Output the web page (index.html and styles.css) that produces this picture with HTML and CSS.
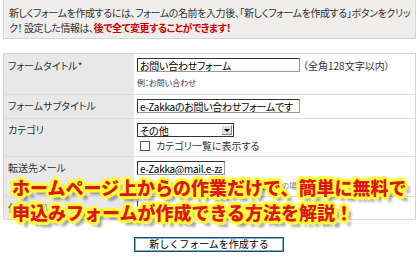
FILE: index.html
```html
<!DOCTYPE html>
<html lang="ja">
<head>
    <meta charset="UTF-8">
    <title>フォーム作成</title>
    <link rel="stylesheet" href="styles.css">
</head>
<body>

    <div class="page">
        <div class="intro">
            新しくフォームを作成するには、フォームの名前を入力後、「新しくフォームを作成する」ボタンをクリッ<br>
            ク！ 設定した情報は、<strong>後で全て変更することができます！</strong>
        </div>

        <table class="form-table">
            <tr class="row-title">
                <th>フォームタイトル*</th>
                <td>
                    <input type="text" class="field wide" value="お問い合わせフォーム"><span class="note">（全角128文字以内）</span>
                    <div class="sample">例：お問い合わせ</div>
                </td>
            </tr>
            <tr class="row-sub">
                <th>フォームサブタイトル</th>
                <td><input type="text" class="field wide" value="e-Zakkaのお問い合わせフォームです"></td>
            </tr>
            <tr class="row-cat">
                <th>カテゴリ</th>
                <td>
                    <div class="select"><span>その他</span><i class="arrow"></i></div>
                    <label class="check"><span class="box"></span>カテゴリ一覧に表示する</label>
                </td>
            </tr>
            <tr class="row-mail">
                <th>転送先メール</th>
                <td>
                    <input type="text" class="field short" value="e-Zakka@mail.e-zakka.jp">
                    <div class="sample">※複数指定する場合は改行して入力。空欄の場合は登録アドレス</div>
                </td>
            </tr>
            <tr class="row-opt">
                <th>任意項目</th>
                <td><div class="area"></div></td>
            </tr>
        </table>

        <div class="actions">
            <button type="button" class="submit">新しくフォームを作成する</button>
        </div>

        <!-- 画像の上に載せたキャッチコピー -->
        <div class="catch">
            ホームページ上からの作業だけで、簡単に無料で<br>
            申込みフォームが作成できる方法を解説！
        </div>
    </div>

</body>
</html>
```

FILE: styles.css
```css
body {
    margin: 0;
    background-color: white;
    font-family: "Noto Sans CJK JP", "DejaVu Sans", sans-serif;
    font-size: 10px;
    color: #333;
    font-feature-settings: "palt";
}

.page {
    position: relative;
    width: 419px;
    height: 260px;
    overflow: hidden;
}

.intro {
    margin: 0 3px 0 3px;
    padding: 5px 6px 3px 5px;
    line-height: 15px;
    background-color: #efeeec;
    border: 1px solid #d4d4d4;
    border-top: none;
    height: 30px;
    white-space: nowrap;
    letter-spacing: -0.4px;
}

.intro strong {
    color: #cc0000;
    font-weight: bold;
}

.form-table {
    margin: 14px 3px 0 3px;
    width: 413px;
    border-collapse: collapse;
    border: 1px solid #d4d4d4;
}

.form-table th,
.form-table td {
    border-bottom: 1px solid #dcdcdc;
    padding: 4px 3px;
    vertical-align: top;
    text-align: left;
    font-weight: normal;
}

.form-table th {
    width: 123px;
    background-color: #e8e8e8;
    padding-left: 4px;
    line-height: 14px;
    padding-top: 4px;
}

.row-title th { height: 31px; padding-top: 5px; }
.row-sub th { height: 15px; }
.row-cat th { height: 28px; }
.row-mail th { height: 30px; }
.row-opt th { height: 14px; }

.field {
    box-sizing: border-box;
    height: 14px;
    margin: 0;
    padding: 0 2px;
    font-family: "Noto Sans CJK JP", sans-serif;
    font-size: 10px;
    font-feature-settings: "palt";
    letter-spacing: -0.3px;
    color: black;
    border: 1px solid #999;
    border-top-color: #333;
    border-left-color: #333;
    vertical-align: top;
}

.wide { width: 163px; }
.short { width: 88px; }

.note {
    margin-left: 3px;
    line-height: 14px;
}

.sample {
    margin-top: 4px;
    font-size: 8px;
    line-height: 12px;
}

.row-mail .sample {
    color: #888;
}

.select {
    display: flex;
    align-items: center;
    justify-content: space-between;
    box-sizing: border-box;
    width: 97px;
    height: 14px;
    border: 1px solid #333;
    font-size: 10px;
    color: black;
    padding-left: 2px;
}

.arrow {
    width: 11px;
    height: 10px;
    margin-right: 1px;
    background-color: #dcdcdc;
    border: 1px solid #888;
    border-top-color: #fff;
    border-left-color: #fff;
    box-sizing: border-box;
    position: relative;
}

.arrow::after {
    content: "";
    position: absolute;
    left: 2px;
    top: 3px;
    border-left: 3px solid transparent;
    border-right: 3px solid transparent;
    border-top: 3px solid black;
}

.check {
    display: flex;
    align-items: center;
    gap: 6px;
    margin-top: 3px;
    margin-left: 3px;
    line-height: 12px;
}

.box {
    width: 8px;
    height: 8px;
    border: 1px solid #555;
    background: white;
}

.area {
    width: 270px;
    height: 14px;
    border-left: 1px solid #333;
}

.actions {
    margin-top: 16px;
    padding-left: 134px;
}

.submit {
    width: 150px;
    height: 15px;
    padding: 0;
    font-family: "Noto Sans CJK JP", sans-serif;
    font-size: 10px;
    line-height: 12px;
    color: black;
    background-color: white;
    border: 1px solid #1d4e6e;
    box-shadow: inset 0 0 0 1px #7fb0cc;
}

.catch {
    position: absolute;
    left: 12px;
    top: 175px;
    font-family: "Noto Sans CJK JP", sans-serif;
    font-weight: 900;
    font-size: 18px;
    line-height: 25px;
    color: #e0141c;
    white-space: nowrap;
    font-feature-settings: normal;
    text-shadow:
        2px 0 0 #ffff33, -2px 0 0 #ffff33, 0 2px 0 #ffff33, 0 -2px 0 #ffff33,
        2px 2px 0 #ffff33, -2px -2px 0 #ffff33, 2px -2px 0 #ffff33, -2px 2px 0 #ffff33,
        3px 1px 0 #ffff33, 1px 3px 0 #ffff33, -3px -1px 0 #ffff33, -1px -3px 0 #ffff33,
        3px 0 1px #ffff33, 0 3px 1px #ffff33, -3px 0 1px #ffff33, 0 -3px 1px #ffff33,
        5px 5px 3px rgba(0, 0, 0, 0.45);
}
```
